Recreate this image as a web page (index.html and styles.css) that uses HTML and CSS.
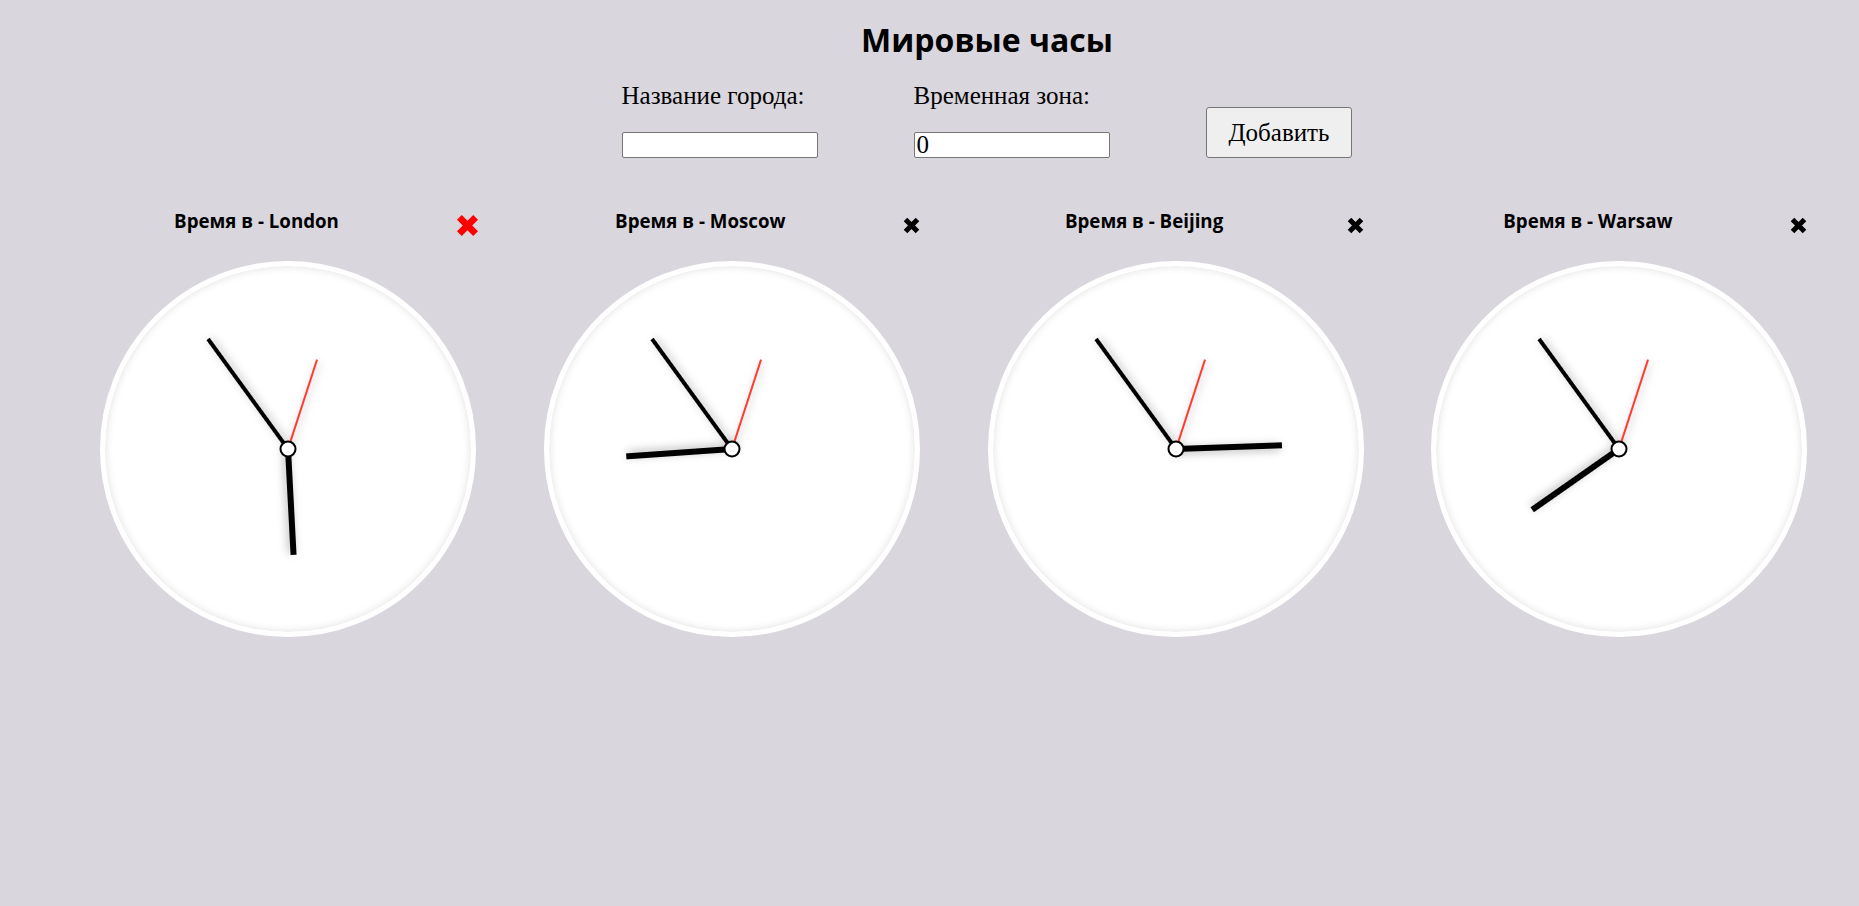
FILE: index.html
```html
<!DOCTYPE html>
<html lang="ru">
<head>
<meta charset="utf-8">
<title>Мировые часы</title>
<link rel="stylesheet" href="styles.css">
</head>
<body>
<div class="app">
  <h1 class="title">Мировые часы</h1>
  <form class="add-form">
    <div class="field">
      <label class="label" for="city">Название города:</label>
      <input class="input" id="city" type="text">
    </div>
    <div class="field">
      <label class="label" for="tz">Временная зона:</label>
      <input class="input" id="tz" type="text" value="0">
    </div>
    <button class="btn" type="button">Добавить</button>
  </form>
</div>

<div class="clocks">
  <div class="card">
    <div class="card-head">
      <h3 class="city">Время в - London</h3>
      <button class="close close--hover" type="button" aria-label="Удалить"><svg viewBox="0 0 17 17"><path d="M2.5 2.5L14.5 14.5M14.5 2.5L2.5 14.5"/></svg></button>
    </div>
    <div class="face">
      <svg viewBox="0 0 366 366">
        <line class="hand hand--hour" x1="183" y1="183" x2="183" y2="77" transform="rotate(177 183 183)"/>
        <line class="hand hand--min" x1="183" y1="183" x2="183" y2="47" transform="rotate(324 183 183)"/>
        <line class="hand hand--sec" x1="183" y1="183" x2="183" y2="89" transform="rotate(18 183 183)"/>
        <circle class="pin" cx="183" cy="183" r="7.5"/>
      </svg>
    </div>
  </div>

  <div class="card">
    <div class="card-head">
      <h3 class="city">Время в - Moscow</h3>
      <button class="close" type="button" aria-label="Удалить"><svg viewBox="0 0 17 17"><path d="M2.5 2.5L14.5 14.5M14.5 2.5L2.5 14.5"/></svg></button>
    </div>
    <div class="face">
      <svg viewBox="0 0 366 366">
        <line class="hand hand--hour" x1="183" y1="183" x2="183" y2="77" transform="rotate(266 183 183)"/>
        <line class="hand hand--min" x1="183" y1="183" x2="183" y2="47" transform="rotate(324 183 183)"/>
        <line class="hand hand--sec" x1="183" y1="183" x2="183" y2="89" transform="rotate(18 183 183)"/>
        <circle class="pin" cx="183" cy="183" r="7.5"/>
      </svg>
    </div>
  </div>

  <div class="card">
    <div class="card-head">
      <h3 class="city">Время в - Beijing</h3>
      <button class="close" type="button" aria-label="Удалить"><svg viewBox="0 0 17 17"><path d="M2.5 2.5L14.5 14.5M14.5 2.5L2.5 14.5"/></svg></button>
    </div>
    <div class="face">
      <svg viewBox="0 0 366 366">
        <line class="hand hand--hour" x1="183" y1="183" x2="183" y2="77" transform="rotate(88 183 183)"/>
        <line class="hand hand--min" x1="183" y1="183" x2="183" y2="47" transform="rotate(324 183 183)"/>
        <line class="hand hand--sec" x1="183" y1="183" x2="183" y2="89" transform="rotate(18 183 183)"/>
        <circle class="pin" cx="183" cy="183" r="7.5"/>
      </svg>
    </div>
  </div>

  <div class="card">
    <div class="card-head">
      <h3 class="city">Время в - Warsaw</h3>
      <button class="close" type="button" aria-label="Удалить"><svg viewBox="0 0 17 17"><path d="M2.5 2.5L14.5 14.5M14.5 2.5L2.5 14.5"/></svg></button>
    </div>
    <div class="face">
      <svg viewBox="0 0 366 366">
        <line class="hand hand--hour" x1="183" y1="183" x2="183" y2="77" transform="rotate(235 183 183)"/>
        <line class="hand hand--min" x1="183" y1="183" x2="183" y2="47" transform="rotate(324 183 183)"/>
        <line class="hand hand--sec" x1="183" y1="183" x2="183" y2="89" transform="rotate(18 183 183)"/>
        <circle class="pin" cx="183" cy="183" r="7.5"/>
      </svg>
    </div>
  </div>
</div>
</body>
</html>
```

FILE: styles.css
```css
* {
  box-sizing: border-box;
}

html,
body {
  margin: 0;
}

body {
  min-height: 100vh;
  background: #d9d6de;
  color: #000;
  font-family: "Liberation Serif", "Times New Roman", serif;
}

.app {
  padding: 20px 0 0 115px;
}

.title {
  margin: 0;
  font: 700 32px/40px "Open Sans", sans-serif;
  text-align: center;
}

.add-form {
  display: flex;
  justify-content: center;
  align-items: flex-end;
  gap: 96px;
  margin: 21px 0 0;
}

.field {
  display: flex;
  flex-direction: column;
  gap: 22px;
}

.label {
  font-size: 25px;
  line-height: 29px;
}

.input {
  width: 196px;
  height: 26px;
  padding: 0 2px;
  font: 25px "Liberation Serif", "Times New Roman", serif;
  color: #000;
  background: #fff;
  border: 1px solid #767676;
  border-radius: 2px;
}

.btn {
  height: 51px;
  padding: 0 22px;
  font: 25px "Liberation Serif", "Times New Roman", serif;
  color: #000;
  background: #efefef;
  border: 1px solid #767676;
  border-radius: 3px;
}

.clocks {
  display: flex;
  gap: 67.8px;
  padding-left: 100px;
  margin-top: 50px;
}

.card {
  width: 376px;
  flex: none;
}

.card-head {
  display: grid;
  grid-template-columns: 313px 63px;
  height: 26px;
}

.city {
  margin: 0;
  font: 700 18.72px/26px "Open Sans", sans-serif;
  text-align: center;
  white-space: nowrap;
}

.close {
  justify-self: end;
  align-self: start;
  display: block;
  width: 17px;
  height: 17px;
  margin-top: 9px;
  padding: 0;
  border: 0;
  background: none;
  color: #000;
}

.close svg {
  display: block;
  width: 17px;
  height: 17px;
  fill: none;
  stroke: currentColor;
  stroke-width: 5;
}

.close--hover {
  color: #f00;
  transform: scale(1.35);
}

.face {
  width: 376px;
  height: 376px;
  margin-top: 27px;
  border: 5px solid #fff;
  border-radius: 50%;
  background: #fff;
  box-shadow: inset 0 0 8px rgba(0, 0, 0, 0.13);
}

.face svg {
  display: block;
  width: 100%;
  height: 100%;
}

.hand {
  stroke-linecap: butt;
  filter: drop-shadow(2px 2px 4px rgba(0, 0, 0, 0.28));
}

.hand--hour {
  stroke: #000;
  stroke-width: 6;
}

.hand--min {
  stroke: #000;
  stroke-width: 4;
}

.hand--sec {
  stroke: #ff3b30;
  stroke-width: 2;
}

.pin {
  fill: #fff;
  stroke: #000;
  stroke-width: 2;
}
```
